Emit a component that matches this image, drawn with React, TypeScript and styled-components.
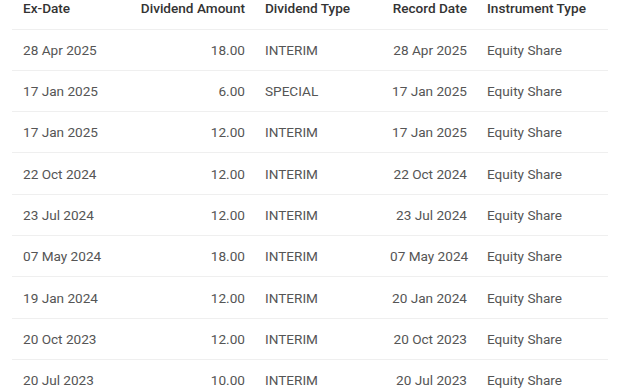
import React from "react";
import styled, { createGlobalStyle } from "styled-components";

const GlobalStyle = createGlobalStyle`
  html, body {
    margin: 0;
    padding: 0;
    background: #ffffff;
  }
  body {
    font-family: Roboto, "Liberation Sans", sans-serif;
  }
`;

const Page = styled.div`
  width: 620px;
  height: 390px;
  overflow: hidden;
  padding: 1px 12px 0;
  box-sizing: border-box;
`;

const Table = styled.table`
  width: 596px;
  border-collapse: collapse;
  table-layout: fixed;
  font-size: 13.6px;
`;

const HeadCell = styled.th<{ $align?: "left" | "right"; $width: number }>`
  width: ${(p) => p.$width}px;
  height: 28px;
  padding: 0 10px 12px 10px;
  vertical-align: top;
  text-align: ${(p) => p.$align ?? "left"};
  font-weight: 500;
  color: #333333;
  line-height: 15px;
  white-space: nowrap;
  border-bottom: 1px solid #efefef;
  box-sizing: border-box;

  &:first-child {
    padding-left: 11px;
  }
`;

const Row = styled.tr`
  height: 41.33px;
  border-bottom: 1px solid #efefef;
`;

const Cell = styled.td<{ $align?: "left" | "right" }>`
  padding: 0 10px;
  text-align: ${(p) => p.$align ?? "left"};
  color: #555555;
  white-space: nowrap;
  vertical-align: middle;

  &:first-child {
    padding-left: 11px;
  }
`;

type Dividend = {
  exDate: string;
  amount: string;
  type: string;
  recordDate: string;
  instrument: string;
};

const dividends: Dividend[] = [
  { exDate: "28 Apr 2025", amount: "18.00", type: "INTERIM", recordDate: "28 Apr 2025", instrument: "Equity Share" },
  { exDate: "17 Jan 2025", amount: "6.00", type: "SPECIAL", recordDate: "17 Jan 2025", instrument: "Equity Share" },
  { exDate: "17 Jan 2025", amount: "12.00", type: "INTERIM", recordDate: "17 Jan 2025", instrument: "Equity Share" },
  { exDate: "22 Oct 2024", amount: "12.00", type: "INTERIM", recordDate: "22 Oct 2024", instrument: "Equity Share" },
  { exDate: "23 Jul 2024", amount: "12.00", type: "INTERIM", recordDate: "23 Jul 2024", instrument: "Equity Share" },
  { exDate: "07 May 2024", amount: "18.00", type: "INTERIM", recordDate: "07 May 2024", instrument: "Equity Share" },
  { exDate: "19 Jan 2024", amount: "12.00", type: "INTERIM", recordDate: "20 Jan 2024", instrument: "Equity Share" },
  { exDate: "20 Oct 2023", amount: "12.00", type: "INTERIM", recordDate: "20 Oct 2023", instrument: "Equity Share" },
  { exDate: "20 Jul 2023", amount: "10.00", type: "INTERIM", recordDate: "20 Jul 2023", instrument: "Equity Share" },
];

export default function App() {
  return (
    <Page>
      <GlobalStyle />
      <Table>
        <thead>
          <tr>
            <HeadCell $width={118}>Ex-Date</HeadCell>
            <HeadCell $width={125} $align="right">Dividend Amount</HeadCell>
            <HeadCell $width={125}>Dividend Type</HeadCell>
            <HeadCell $width={97} $align="right">Record Date</HeadCell>
            <HeadCell $width={131}>Instrument Type</HeadCell>
          </tr>
        </thead>
        <tbody>
          {dividends.map((d, i) => (
            <Row key={i}>
              <Cell>{d.exDate}</Cell>
              <Cell $align="right">{d.amount}</Cell>
              <Cell>{d.type}</Cell>
              <Cell $align="right">{d.recordDate}</Cell>
              <Cell>{d.instrument}</Cell>
            </Row>
          ))}
        </tbody>
      </Table>
    </Page>
  );
}
